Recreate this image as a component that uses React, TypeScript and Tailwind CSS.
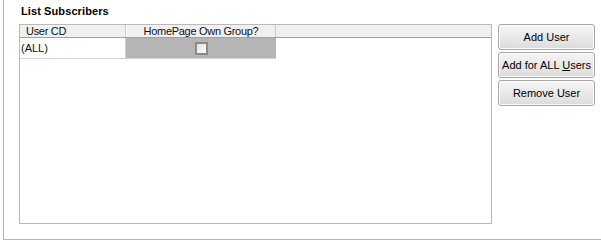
const font = { fontFamily: '"Liberation Sans", Arial, sans-serif' };

const WinButton = ({ children }: { children: React.ReactNode }) => (
  <button className="h-[26px] w-[97px] rounded-[3px] border border-[#a7a7a7] bg-linear-to-b from-[#f5f5f5] to-[#dcdcdc] text-[11px] leading-[13px] text-black shadow-[inset_0_0_0_1px_#fbfbfb]">
    {children}
  </button>
);

export default function App() {
  return (
    <div className="h-[246px] w-[601px] overflow-hidden bg-white" style={font}>
      <div className="ml-[3px] h-[240px] w-[620px] border-b border-l border-[#b4b4b4] pl-[15px]">
        <div className="ml-[2px] pt-[5px] text-[11px] font-bold leading-[13px] tracking-[0.1px] text-black">
          List Subscribers
        </div>
        <div className="mt-[6px] flex">
          <div className="h-[200px] w-[473px] border border-[#b9b9b9] bg-white">
            {/* header */}
            <div className="flex h-[13px] border-b border-[#a0a0a0] bg-[#f0f0f0] text-[11px] leading-[12px] tracking-[-0.3px] text-[#111]">
              <div className="w-[106px] border-r border-[#c8c8c8] pl-[6px]">User CD</div>
              <div className="w-[150px] border-r border-[#c8c8c8] border-l border-l-white text-center">
                HomePage Own Group?
              </div>
            </div>
            {/* row */}
            <div className="flex h-[21px] w-[256px] border-b border-[#d4d4d4] text-[11px] leading-[20px] text-[#111]">
              <div className="w-[106px] border-r border-[#d4d4d4] pl-[1px]">(ALL)</div>
              <div className="flex w-[150px] items-center justify-center bg-[#b5b5b5]">
                <div className="h-[13px] w-[13px] border-2 border-[#8a8a8a] bg-linear-to-br from-[#e4e4e4] to-[#fbfbfb]" />
              </div>
            </div>
          </div>
          <div className="ml-[6px] flex flex-col gap-[2px]">
            <WinButton>Add User</WinButton>
            <WinButton>
              Add for ALL <span className="underline">U</span>sers
            </WinButton>
            <WinButton>Remove User</WinButton>
          </div>
        </div>
      </div>
    </div>
  );
}
